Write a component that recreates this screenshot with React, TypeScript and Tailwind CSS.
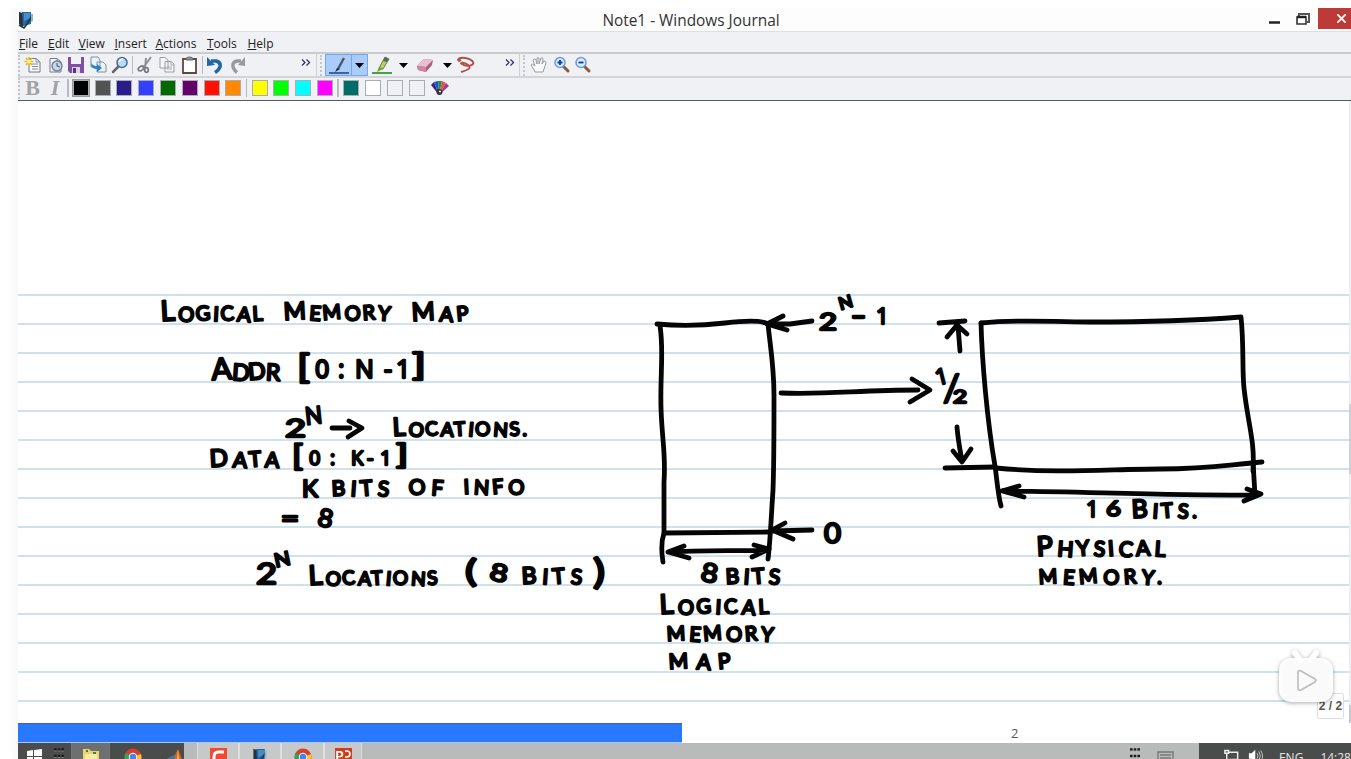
import React from "react";

type Glyphs = { t: string; x: number; y: number; w?: number; s: number; big?: number; r?: number };

const words: Glyphs[] = [
  { t: "LOGICAL", x: 161, y: 321, w: 102, s: 20, big: 28 },
  { t: "MEMORY", x: 284, y: 320, w: 106, s: 20, big: 24 },
  { t: "MAP", x: 412, y: 321, w: 57, s: 20, big: 25 },
  { t: "ADDR", x: 212, y: 380, w: 68, s: 23, big: 30 },
  { t: "[", x: 297, y: 378, w: 13, s: 33 },
  { t: "]", x: 412, y: 376, w: 14, s: 31 },
  { t: "2", x: 285, y: 437, w: 21, s: 25 },
  { t: "N", x: 305, y: 424, w: 17, s: 24, r: -6 },
  { t: "LOCATIONS.", x: 393, y: 436, w: 134, s: 19, big: 25 },
  { t: "DATA", x: 210, y: 467, w: 69, s: 21, big: 24 },
  { t: "[", x: 292, y: 466, w: 11, s: 28 },
  { t: "]", x: 396, y: 464, w: 12, s: 26 },
  { t: "K", x: 302, y: 497, w: 16, s: 23 },
  { t: "BITS", x: 332, y: 496, w: 57, s: 21 },
  { t: "OF", x: 409, y: 495, w: 34, s: 21 },
  { t: "INFO", x: 464, y: 494, w: 60, s: 20 },
  { t: "=", x: 281, y: 526, w: 18, s: 22 },
  { t: "8", x: 318, y: 527, w: 15, s: 25, r: 12 },
  { t: "2", x: 256, y: 584, w: 21, s: 28 },
  { t: "N", x: 274, y: 566, w: 16, s: 19, r: -12 },
  { t: "LOCATIONS", x: 309, y: 585, w: 129, s: 19, big: 27 },
  { t: "(", x: 465, y: 582, w: 12, s: 31 },
  { t: "8", x: 490, y: 581, w: 18, s: 24, r: 12 },
  { t: "BITS", x: 522, y: 584, w: 60, s: 21, big: 23 },
  { t: ")", x: 593, y: 584, w: 12, s: 34 },
  { t: "2", x: 819, y: 330, w: 18, s: 23 },
  { t: "N", x: 838, y: 308, w: 14, s: 17, r: -16 },
  { t: "-", x: 851, y: 325, w: 15, s: 26 },
  { t: "0", x: 824, y: 543, w: 17, s: 26 },
  { t: "8", x: 701, y: 582, w: 17, s: 26, r: 10 },
  { t: "BITS", x: 726, y: 584, w: 54, s: 21 },
  { t: "LOGICAL", x: 660, y: 614, w: 109, s: 20, big: 27 },
  { t: "MEMORY", x: 667, y: 641, w: 106, s: 20 },
  { t: "MAP", x: 669, y: 669, w: 62, s: 21 },
  { t: "2", x: 953, y: 403, w: 14, s: 18 },
  { t: "6", x: 1106, y: 516, w: 15, s: 22 },
  { t: "BITS.", x: 1132, y: 518, w: 65, s: 20, big: 25 },
  { t: "PHYSICAL", x: 1037, y: 556, w: 128, s: 21, big: 27 },
  { t: "MEMORY.", x: 1039, y: 584, w: 123, s: 20 },
];

const tilt = "-3 4 -5 3 -4 5 -3 4 -5 0";

const strokes = [
  "M332 428 L350 428 M349 421 L362 428 L348 437",
  "M657 324 Q690 327 725 323 T768 324",
  "M660 326 C664 350 660 375 661 408 C662 440 666 455 664 482 L664 533 C660 545 662 555 663 562",
  "M768 324 C770 345 774 365 774 396 C774 430 774 465 773 490 C771 520 770 545 768 559",
  "M664 533 L768 532",
  "M668 552 C700 550 735 551 768 550 M684 546 L668 552 L689 558 M754 545 L769 549 L752 557",
  "M812 530 L772 531 M785 523 L772 530 L793 539",
  "M812 321 L790 324 L768 324 M783 316 L767 324 L787 330",
  "M781 393 C825 395 860 390 918 390 M912 379 L930 390 L910 402",
  "M939 323 L965 321 M960 351 L958 326 M947 337 L957 325 L967 334",
  "M957 427 C958 440 960 450 962 461 M953 451 L962 462 L971 449",
  "M945 468 L995 467",
  "M981 323 C1020 319 1050 322 1090 322 C1150 322 1190 321 1241 317 C1244 345 1242 370 1244 388 C1248 425 1255 440 1253 471",
  "M981 323 C982 360 987 420 995 466 C997 480 998 495 1001 506",
  "M996 468 C1060 474 1110 469 1160 469 C1210 469 1225 465 1262 462",
  "M1253 462 L1255 495",
  "M1002 491 C1060 491 1190 496 1258 495 M1019 486 L1002 491 L1024 497 M1247 489 L1261 494 L1244 501",
];

function Ink() {
  return (
    <svg className="absolute left-0 top-0 h-[759px] w-[1351px]" viewBox="0 0 1351 759">
      <g fill="none" stroke="#050505" strokeWidth="4.8" strokeLinecap="round" strokeLinejoin="round">
        {strokes.map((d) => <path key={d} d={d} />)}
      </g>
      <g fill="#050505" stroke="#050505" strokeWidth="2.3" strokeLinejoin="round" strokeLinecap="round" fontFamily="Lato, sans-serif" fontWeight="400">
        {words.map((g, i) => (
          <text key={i} x={g.x} y={g.y} fontSize={g.s} textLength={g.w} lengthAdjust={g.t.length > 1 ? "spacing" : "spacingAndGlyphs"} rotate={g.t.length > 1 ? tilt : undefined} transform={g.r ? `rotate(${g.r} ${g.x + 8} ${g.y - 8})` : undefined}>
            {g.big ? <><tspan fontSize={g.big}>{g.t[0]}</tspan>{g.t.slice(1)}</> : g.t}
          </text>
        ))}
        <g fontFamily="'Open Sans', sans-serif">
          <text x="315 338 355 384 396" y="378" fontSize="25">0:N-1</text>
          <text x="309 330 351 367 380" y="465" fontSize="20">0:K-1</text>
          <text x="876" y="324" fontSize="22">1</text>
          <text x="935" y="384" fontSize="22" transform="rotate(-14 942 376)">1</text>
          <text x="1086" y="517" fontSize="22">1</text>
        </g>
        <text x="943" y="401" fontSize="37">/</text>
      </g>
    </svg>
  );
}

function JournalIcon({ className }: { className: string }) {
  return (
    <svg className={className} viewBox="0 0 16 18">
      <path d="M1 1 L5 2 L5 16 L1 13Z" fill="#26323c" />
      <path d="M4 1 L13 1 L13 13 L5 15Z" fill="#2467a5" />
      <path d="M6 2 L12 2 L12 7 L6 10Z" fill="#478ec6" />
      <path d="M1 14 L6 17 L9 13 L14 5" stroke="#23343f" strokeWidth="1.6" fill="none" />
      <path d="M13 3 L15 3 L15 10 L13 11" fill="#91b5c9" />
    </svg>
  );
}

function Page({ children, x = 0 }: { children?: React.ReactNode; x?: number }) {
  return (
    <svg className="h-[18px] w-[18px]" viewBox="0 0 18 18">
      <path d={`M${4 + x} 2.5 H${11 + x} L${15 + x} 6 V16 H${4 + x}Z`} fill="#f6f7fa" stroke="#757b88" />
      <path d={`M${11 + x} 2.5 V6 H${15 + x} M${7 + x} 8 H${13 + x} M${7 + x} 10.5 H${13 + x} M${7 + x} 13 H${13 + x}`} fill="none" stroke="#89909c" />
      {children}
    </svg>
  );
}

function Magnifier({ sign }: { sign?: string }) {
  return (
    <svg className="h-[18px] w-[18px]" viewBox="0 0 18 18">
      <path d="M10 10 L15 15" stroke="#8a5a3e" strokeWidth="3" strokeLinecap="round" />
      <circle cx="7" cy="6.5" r="5" fill="#d9edff" stroke="#6c9bdc" strokeWidth="1.5" />
      {sign && <path d={sign} stroke="#1638aa" strokeWidth="1.8" />}
    </svg>
  );
}

function Cell({ children, w = "w-[21.8px]" }: { children: React.ReactNode; w?: string }) {
  return <div className={`flex h-full shrink-0 items-center justify-center ${w}`}>{children}</div>;
}

function Down() {
  return <svg className="h-[5px] w-[9px]" viewBox="0 0 9 5"><path d="M0 0H9L4.5 5Z" fill="#000" /></svg>;
}

function More() {
  return <svg className="h-[7px] w-[10px]" viewBox="0 0 10 7"><path d="M1 .5 L4 3.5 L1 6.5 M5.5 .5 L8.5 3.5 L5.5 6.5" fill="none" stroke="#34316f" strokeWidth="1.3" /></svg>;
}

function Grip() {
  return <div className="h-[21px] shrink-0 border-l-2 border-dotted border-[#c4c6cd]" />;
}

function Separator() {
  return <div className="h-[18px] w-[1.5px] shrink-0 bg-[#b9bbc1]" />;
}

function ToolBar() {
  return (
    <div className="flex h-[24px] shrink-0 items-center border-b-2 border-[#d3d4d8] bg-[#f0f1f5]">
      <div className="flex h-full w-[299px] items-center border-r border-[#d0d1d6]">
        <Grip />
        <div className="w-[2px]" />
        <Cell><Page x={1}><path d="M5 1V10 M.5 5.5H9.5 M2 2L8 9 M8 2L2 9" stroke="#e8b51c" strokeWidth="1.5" /><circle cx="5" cy="5.5" r="2" fill="#fff197" /></Page></Cell>
        <Cell><Page><circle cx="11" cy="10" r="5" fill="#c9d7e5" stroke="#697e95" strokeWidth="1.3" /><path d="M11 7V10L14 11" stroke="#41556b" fill="none" /></Page></Cell>
        <Cell>
          <svg className="h-[18px] w-[18px]" viewBox="0 0 18 18"><path d="M1 1H17V17H3L1 15Z" fill="#8050a7" /><path d="M4 1H14V8H4Z" fill="#f4f0f8" /><path d="M5 11H13V17H5Z" fill="#ddd1e6" /><path d="M6 12H9V17H6Z" fill="#59347c" /></svg>
        </Cell>
        <Cell>
          <svg className="h-[18px] w-[18px]" viewBox="0 0 18 18"><path d="M2 1H9L11 4V11H2Z M8 6H14L17 9V16H8Z" fill="#eef2f7" stroke="#858d9c" /><path d="M2 7Q2 13 8 13V16L13 12L8 8V10Q5 11 2 7Z" fill="#2981c7" /></svg>
        </Cell>
        <Cell>
          <svg className="h-[18px] w-[18px]" viewBox="0 0 18 18"><path d="M7 11L2 16" stroke="#6d6270" strokeWidth="2.5" strokeLinecap="round" /><circle cx="11" cy="6.5" r="5" fill="#b9dcf7" stroke="#49679a" strokeWidth="1.5" /><path d="M8 6Q9 3 12 3" fill="none" stroke="#fff" strokeWidth="1.5" /></svg>
        </Cell>
        <div className="w-[1px]" />
        <Separator />
        <div className="w-[1px]" />
        <Cell>
          <svg className="h-[18px] w-[18px]" viewBox="0 0 18 18"><path d="M15 1L7 12 M10 2L9 12" stroke="#8c9097" strokeWidth="2" /><ellipse cx="5" cy="12.5" rx="3" ry="2" transform="rotate(-35 5 12.5)" fill="none" stroke="#777b83" strokeWidth="1.7" /><ellipse cx="10.5" cy="14" rx="1.8" ry="2.3" fill="none" stroke="#777b83" strokeWidth="1.7" /></svg>
        </Cell>
        <Cell>
          <svg className="h-[18px] w-[18px]" viewBox="0 0 18 18"><path d="M2 1.5H7L10 4V12H2Z M7 5.5H13L16 8V16H7Z" fill="#f6f6f8" stroke="#999ca2" /><path d="M13 6V9H16 M9 11H14 M9 13H14" fill="none" stroke="#aaa" /></svg>
        </Cell>
        <Cell>
          <svg className="h-[18px] w-[18px]" viewBox="0 0 18 18"><path d="M3 3H16V17H3Z" fill="#fff" stroke="#5f4936" strokeWidth="1.8" /><path d="M6 3Q6 1 9.5 1Q13 1 13 3V4H6Z" fill="#909298" stroke="#66676b" /></svg>
        </Cell>
        <div className="w-[2px]" />
        <Separator />
        <Cell w="w-[24px]">
          <svg className="h-[18px] w-[18px]" viewBox="0 0 18 18"><path d="M5 5H10Q15 6 14 11Q13 14 9 16.5" fill="none" stroke="#2366a8" strokeWidth="3.6" /><path d="M1 1V10L9 9Z" fill="#2366a8" /></svg>
        </Cell>
        <Cell>
          <svg className="h-[18px] w-[18px]" viewBox="0 0 18 18"><path d="M12 5H8Q3 6 4 11Q5 14 8 16.5" fill="none" stroke="#9699a0" strokeWidth="3.4" /><path d="M16 1V10L9 9Z" fill="#9699a0" /></svg>
        </Cell>
        <div className="flex grow justify-end pr-[5px] pb-[6px]"><More /></div>
      </div>
      <div className="flex h-full w-[203px] items-center border-r border-[#d0d1d6] pl-[3px]">
        <Grip />
        <div className="ml-[3px] flex h-[22px] w-[43px] shrink-0 border border-[#74a7ed] bg-[#a9ccfb]">
          <div className="flex w-[26px] items-center justify-center border-r border-[#74a7ed]">
            <svg className="h-[20px] w-[22px]" viewBox="0 0 22 20"><path d="M1 18H21" stroke="#1e4177" strokeWidth="1.5" /><path d="M16 3L10 14" stroke="#465a68" strokeWidth="2.4" /><path d="M9 13L7 17L12 14" fill="#1a2834" /></svg>
          </div>
          <div className="flex grow items-center justify-center"><Down /></div>
        </div>
        <Cell w="w-[27px]">
          <svg className="h-[20px] w-[20px]" viewBox="0 0 20 20"><path d="M0 18H20" stroke="#269326" strokeWidth="1.7" /><path d="M13 2L17 4L11 14L7 13Z" fill="#b9cf56" stroke="#6a7d61" /><path d="M13 2L17 4L15 7L11 6Z" fill="#536a61" /><path d="M7 12L5 17L11 14Z" fill="#65a62d" /></svg>
        </Cell>
        <Cell w="w-[16px]"><Down /></Cell>
        <Cell w="w-[28px]">
          <svg className="h-[18px] w-[18px]" viewBox="0 0 18 18"><path d="M1 10L8 3L17 4L16 9L10 16L2 14Z" fill="#a85d7c" /><path d="M1 10L8 3L17 4L10 11Z" fill="#eac1d0" /><path d="M1 10L10 11V16L2 14Z" fill="#cd87a1" /></svg>
        </Cell>
        <Cell w="w-[16px]"><Down /></Cell>
        <Cell w="w-[22px]">
          <svg className="h-[18px] w-[18px]" viewBox="0 0 18 18"><path d="M1 4C2 0 14 2 16 6C18 10 9 11 5 8C2 7 7 5 11 9C15 12 11 14 4 16M4 4Q1 6 1 3" fill="none" stroke="#b04e43" strokeWidth="1.9" /></svg>
        </Cell>
        <div className="flex grow justify-end pr-[4px] pb-[6px]"><More /></div>
      </div>
      <div className="ml-[3px]"><Grip /></div>
      <Cell w="w-[27px]">
        <svg className="h-[18px] w-[18px]" viewBox="0 0 18 18"><path d="M5 16Q4 13 1 9Q2 7 5 10L3 4Q4 2 6 4L7 8L7 2Q9 1 9 3V8L11 2Q13 1 13 4L12 8L14 5Q16 5 16 7L13 16Z" fill="#fafafa" stroke="#979ba0" /></svg>
      </Cell>
      <Cell w="w-[19px]"><Magnifier sign="M4.5 6.5H9.5M7 4V9" /></Cell>
      <Cell w="w-[24px]"><Magnifier sign="M4.5 6.5H9.5" /></Cell>
    </div>
  );
}

const dark = ["bg-[#000]", "bg-[#535353]", "bg-[#2a1c8a]", "bg-[#3440ff]", "bg-[#006900]", "bg-[#66006b]", "bg-[#ff1000]", "bg-[#ff8900]"];
const bright = ["bg-[#ffff00]", "bg-[#00ff00]", "bg-[#00ffff]", "bg-[#ff00ff]"];
const custom = ["bg-[#006c69]", "bg-white", "bg-[#f0f1f5]", "bg-[#f0f1f5]"];

function Swatches({ colors }: { colors: string[] }) {
  return (
    <div className="flex gap-[5.8px]">
      {colors.map((c, i) => (
        <div key={i} className={`h-[16px] w-[16px] shrink-0 border border-[#aaacb3] ${c} ${c === "bg-[#000]" ? "outline outline-1 outline-[#999]" : ""}`} />
      ))}
    </div>
  );
}

function ColorBar() {
  return (
    <div className="flex h-[23px] shrink-0 items-center border-b border-[#555960] bg-[#f0f1f5] pb-[2px]">
      <div className="flex w-[54.8px] items-center">
        <Grip />
        <span className="w-[25px] text-center font-['Liberation_Serif',serif] text-[22px] leading-[20px] font-bold text-[#a1a2a7]">B</span>
        <span className="w-[20px] text-center font-['Liberation_Serif',serif] text-[22px] leading-[20px] font-bold text-[#a1a2a7] italic">I</span>
        <div className="ml-[2px]"><Separator /></div>
      </div>
      <Swatches colors={dark} />
      <div className="flex w-[10.2px] justify-center"><Separator /></div>
      <Swatches colors={bright} />
      <div className="flex w-[10.5px] justify-center"><Separator /></div>
      <Swatches colors={custom} />
      <svg className="ml-[6px] h-[16px] w-[18px]" viewBox="0 0 18 16">
        <path d="M8 15L0 5L3 2Z" fill="#362779" /><path d="M8 15L3 2L7 1Z" fill="#2852ca" /><path d="M8 15L7 1L11 1Z" fill="#238d4e" /><path d="M8 15L11 1L15 3Z" fill="#e15a35" /><path d="M8 15L15 3L18 6Z" fill="#a33b93" /><circle cx="8.5" cy="12" r="3" fill="#31313d" /><circle cx="9" cy="11.5" r="1" fill="#fff" />
      </svg>
    </div>
  );
}

function Chrome() {
  return (
    <svg className="h-[18px] w-[18px]" viewBox="0 0 18 18"><circle cx="9" cy="9" r="8.5" fill="#d63d2f" /><path d="M1.5 5L9 9V18A9 9 0 0 1 1.5 5" fill="#31a553" /><path d="M9 9L17 6A9 9 0 0 1 8 18Z" fill="#f3c531" /><circle cx="9" cy="9" r="4.2" fill="#fff" /><circle cx="9" cy="9" r="3.3" fill="#4585e7" /></svg>
  );
}

function Task({ w, children, dim }: { w: string; children: React.ReactNode; dim?: boolean }) {
  return <div className={`flex h-[20px] shrink-0 items-start justify-center border-x pt-[5px] ${w} ${dim ? "border-[#757575] bg-[#6e706f]" : "border-[#dedede] bg-[#c7c8c8]"}`}>{children}</div>;
}

function Dots() {
  return <svg className="h-[12px] w-[10px]" viewBox="0 0 10 12"><path d="M0 1.5H10M0 8H10" stroke="#1c1c1c" strokeWidth="2.5" strokeDasharray="2.6 1.1" /><path d="M0 3H10M0 9.5H10" stroke="#999" strokeWidth=".7" strokeDasharray="2.6 1.1" /></svg>;
}

function TaskBar() {
  return (
    <div className="flex h-[16px] shrink-0 items-start overflow-hidden bg-[#b9baba]">
      <div className="flex h-full w-[166px] shrink-0 bg-[#4a4b4b]">
        <div className="flex w-[53px] gap-[12px] pt-[5px] pl-[9px]">
          <svg className="mt-[1px] h-[15px] w-[15px] shrink-0" viewBox="0 0 15 15"><path d="M0 2L6 1V7H0ZM7 1L15 0V7H7ZM0 8H6V14L0 13ZM7 8H15V15L7 14Z" fill="#fff" /></svg>
          <Dots />
        </div>
        <Task w="w-[39px]" dim>
          <svg className="h-[17px] w-[18px]" viewBox="0 0 18 17"><path d="M1 1H7L9 3H17V17H1Z" fill="#e8d477" /><path d="M3 6H15V17H3Z" fill="#f8eca0" /><path d="M4 3H6M11 5H14" stroke="#497a45" strokeWidth="2" /><path d="M5 13H13V17H5Z" fill="#81bad1" /></svg>
        </Task>
        <div className="flex w-[46px] justify-center pt-[5px]"><Chrome /></div>
        <div className="flex grow justify-end pt-[6px]"><svg className="h-[15px] w-[17px] shrink-0" viewBox="0 0 17 15"><path d="M0 10L8 6L11 0L17 15L10 11L6 14Z" fill="#d26327" /><path d="M0 10L8 6L7 13Z" fill="#397ba6" /><path d="M11 0L12 10L10 11Z" fill="#f2ba4b" /></svg></div>
      </div>
      <div className="w-[13px]" />
      <Task w="w-[42px]"><svg className="h-[17px] w-[17px]" viewBox="0 0 17 17"><path d="M0 0H17V17H0Z" fill="#ef4930" /><path d="M14 4H8Q4 4 4 9V17" fill="none" stroke="#fff" strokeWidth="3" /></svg></Task>
      <Task w="w-[42px]"><JournalIcon className="h-[17px] w-[16px]" /></Task>
      <Task w="w-[43px]"><Chrome /></Task>
      <Task w="w-[38px]">
        <div className="flex h-[17px] w-[17px] justify-center bg-[#c8401f] font-['Liberation_Sans',sans-serif] text-[12px] leading-[16px] font-bold text-white">P<svg className="mt-[2px] h-[9px] w-[7px]" viewBox="0 0 7 9"><path d="M1 1H3A3 3 0 0 1 3 7H1" fill="none" stroke="#fff" strokeWidth="1.7" /></svg></div>
      </Task>
      <div className="grow" />
      <div className="mr-[17px] pt-[5px]"><Dots /></div>
      <svg className="mt-[8px] mr-[25px] h-[12px] w-[17px]" viewBox="0 0 17 12"><path d="M1 1H16V12H1ZM3 4H14M3 7H14M3 10H14" fill="none" stroke="#77797a" strokeWidth="1.4" /></svg>
      <div className="flex h-full w-[152px] shrink-0 bg-[#4a4b4b] pl-[25px]">
        <svg className="mt-[6px] h-[13px] w-[17px]" viewBox="0 0 17 13"><path d="M5 3H15V11H5M3 4V13M1 1H5V4H1Z" fill="none" stroke="#eee" strokeWidth="1.6" /></svg>
        <svg className="mt-[6px] ml-[9px] h-[14px] w-[17px]" viewBox="0 0 17 14"><path d="M1 4H4L8 0V14L4 10H1Z" fill="#fff" /><path d="M10 4Q12 7 10 10M12 2Q15 7 12 12M14 1Q18 7 14 13" fill="none" stroke="#ccc" /></svg>
        <span className="mt-[8px] ml-[15px] font-['Open_Sans',sans-serif] text-[12px] leading-[14px] text-[#e6e6e6]">ENG</span>
        <span className="mt-[8px] ml-[17px] font-['Open_Sans',sans-serif] text-[12px] leading-[14px] whitespace-nowrap text-[#e6e6e6]">14:28</span>
      </div>
    </div>
  );
}

const menus = [["File", "w-[29px]"], ["Edit", "w-[30.5px]"], ["View", "w-[36px]"], ["Insert", "w-[41px]"], ["Actions", "w-[51.5px]"], ["Tools", "w-[40.5px]"], ["Help", "w-[40px]"]];

export default function App() {
  return (
    <div className="relative flex h-[759px] w-[1351px] overflow-hidden bg-white pt-[8px] font-['Open_Sans',sans-serif]">
      <div className="h-full w-[18px] shrink-0 bg-gradient-to-r from-white via-white to-[#f8f8f8]" />
      <div className="flex w-[1333px] flex-col">
        <div className="flex h-[24px] shrink-0 items-start border-b border-[#dedfe2] bg-[#fdfdfd]">
          <JournalIcon className="mt-[3px] h-[18px] w-[16px]" />
          <div className="grow pt-[3px] pl-[79px] text-center text-[15.4px] leading-[20px] text-[#333]"><span className="inline-block w-[181px] whitespace-nowrap">Note1 - Windows Journal</span></div>
          <svg className="mt-[5px] mr-[8px] h-[12px] w-[41px]" viewBox="0 0 41 12"><path d="M0 9.5H11" stroke="#222" strokeWidth="2.5" /><path d="M30 3V1H40V9H38" fill="none" stroke="#555" strokeWidth="2" /><path d="M28 4H37V11H28Z" fill="#fff" stroke="#333" strokeWidth="1.6" /><path d="M28 4H37" stroke="#222" strokeWidth="2.5" /></svg>
          <div className="flex h-[21px] w-[33px] shrink-0 items-center justify-end bg-[#bd3b37] pr-[5px]"><svg className="h-[9px] w-[9px]" viewBox="0 0 9 9"><path d="M0 0L9 9M9 0L0 9" stroke="#fff" strokeWidth="1.8" /></svg></div>
        </div>
        <div className="flex h-[22px] shrink-0 border-b-2 border-[#cbccd0] bg-[#f0f1f5] pl-[1px] text-[12px] leading-[23px] text-[#202020]">
          {menus.map(([m, w]) => <span key={m} className={`${w} shrink-0 whitespace-nowrap`}><span className="underline underline-offset-1">{m[0]}</span>{m.slice(1)}</span>)}
        </div>
        <ToolBar />
        <ColorBar />
        <div className="flex h-[622px] shrink-0 flex-col bg-white">
          <div className="flex grow">
            <div className="flex w-[1331px] flex-col pt-[165.5px]">
              {Array.from({ length: 15 }, (_, i) => <div key={i} className="h-[29.07px] shrink-0 border-b-2 border-[#cfe1ed]" />)}
            </div>
            <div className="flex w-[2px] flex-col bg-[#ededf1] pt-[303px]"><div className="h-[70px] bg-[#d0d1d6]" /><div className="mt-[231px] h-[18px] bg-[#c8c9cf]" /></div>
          </div>
        </div>
        <div className="flex h-[20px] shrink-0 bg-white">
          <div className="h-full w-[664px] border-t border-b border-t-[#465e99] border-b-[#a8c7ff] bg-[#2979ff]" />
          <span className="ml-[329px] text-[13px] leading-[20px] text-[#555]">2</span>
        </div>
        <TaskBar />
      </div>
      <Ink />
      <div className="absolute top-[693px] left-[1317px] flex h-[26px] w-[27px] items-center justify-center rounded-[2px] border border-[#dbdfe9] bg-white font-['Liberation_Sans',sans-serif] text-[12px] font-bold whitespace-nowrap text-[#555]">2 / 2</div>
      <svg className="absolute top-[645px] left-[1272px] h-[66px] w-[68px]" viewBox="0 0 68 66">
        <g className="drop-shadow-[0_1px_2px_rgba(0,0,0,.35)]">
          <path d="M23 8L28 15M44 8L39 15" stroke="#fff" strokeWidth="6" strokeLinecap="round" />
          <rect x="7" y="13" width="54" height="44" rx="12" fill="#fff" fillOpacity=".94" />
        </g>
        <path d="M26 27Q26 25 29 26L43 34Q45 35 43 37L29 45Q26 46 26 43Z" fill="#fafafa" stroke="#bcbcbc" strokeWidth="1.6" />
      </svg>
    </div>
  );
}
